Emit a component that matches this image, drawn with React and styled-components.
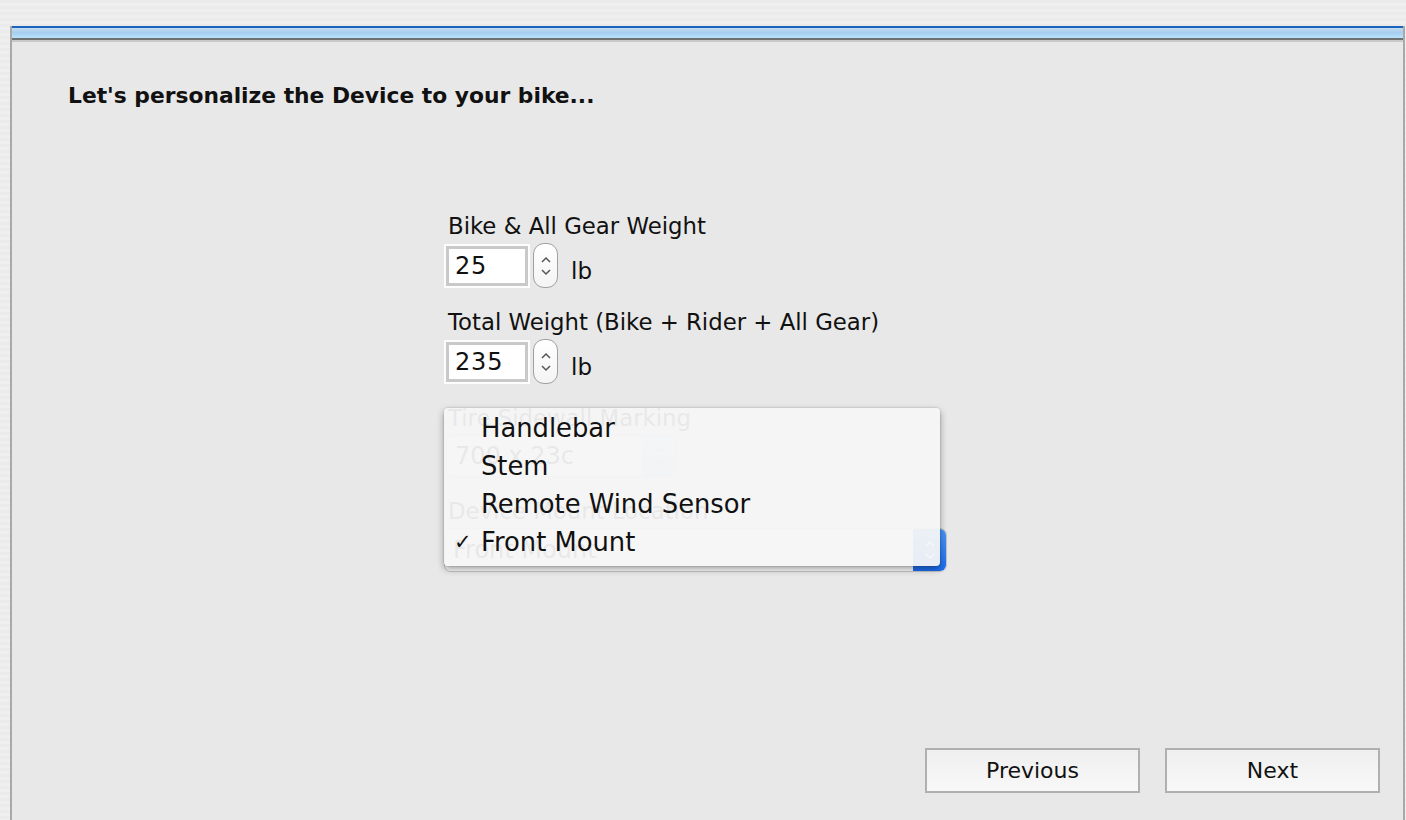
import React from 'react';
import styled, { createGlobalStyle } from 'styled-components';

const GlobalStyle = createGlobalStyle`
  html, body {
    margin: 0;
    padding: 0;
    height: 100%;
    overflow: hidden;
  }
  body {
    font-family: "DejaVu Sans", "Liberation Sans", sans-serif;
    color: #111;
    background: repeating-linear-gradient(
      to bottom,
      #ebebeb 0px,
      #ebebeb 3px,
      #efefef 3px,
      #efefef 6px
    );
  }
`;

const menuItems = [
  { name: 'Handlebar' },
  { name: 'Stem' },
  { name: 'Remote Wind Sensor' },
  { name: 'Front Mount', checked: true },
];

const Chevrons = ({ color = '#555' }) => (
  <svg width="12" height="26" viewBox="0 0 12 26">
    <path d="M2 9 L6 5 L10 9" fill="none" stroke={color} strokeWidth="1.5" />
    <path d="M2 17 L6 21 L10 17" fill="none" stroke={color} strokeWidth="1.5" />
  </svg>
);

const NumberField = ({ value, unit }) => (
  <ControlRow>
    <TextBox>{value}</TextBox>
    <Stepper>
      <Chevrons />
    </Stepper>
    <Unit>{unit}</Unit>
  </ControlRow>
);

const App = () => {
  return (
    <>
      <GlobalStyle />
      <Window>
        <TitleStrip />
        <Content>
          <Heading>Let's personalize the Device to your bike...</Heading>
          <Form>
            <Field>
              <Label>Bike &amp; All Gear Weight</Label>
              <NumberField value="25" unit="lb" />
            </Field>
            <Field>
              <Label>Total Weight (Bike + Rider + All Gear)</Label>
              <NumberField value="235" unit="lb" />
            </Field>
            <Field>
              <Label>Tire Sidewall Marking</Label>
              <PopUp width={230}>
                <PopUpValue>700 x 23c</PopUpValue>
                <PopUpArrows>
                  <Chevrons color="#8aa6d6" />
                </PopUpArrows>
              </PopUp>
            </Field>
            <Field>
              <Label>Device Mount Location</Label>
              <MenuAnchor>
                <PopUp width={503} active>
                  <PopUpValue>Front Mount</PopUpValue>
                  <PopUpArrows active>
                    <Chevrons color="#fff" />
                  </PopUpArrows>
                </PopUp>
                <Menu>
                  {menuItems.map(item => (
                    <MenuItem key={item.name}>
                      <Check>{item.checked ? '✓' : ''}</Check>
                      <span>{item.name}</span>
                    </MenuItem>
                  ))}
                </Menu>
              </MenuAnchor>
            </Field>
          </Form>
          <ButtonBar>
            <PushButton>Previous</PushButton>
            <PushButton>Next</PushButton>
          </ButtonBar>
        </Content>
      </Window>
    </>
  );
};
export default App;

const Window = styled.div`
  margin: 26px 1px 0 10px;
  height: calc(100vh - 26px);
  display: flex;
  flex-direction: column;
  border-left: 2px solid #a9a9a9;
  border-right: 2px solid #a9a9a9;
  background: #e8e8e8;
  box-sizing: border-box;
`;

const TitleStrip = styled.div`
  height: 10px;
  border-top: 2px solid #1b64bb;
  border-bottom: 2px solid #707070;
  box-shadow: 0 2px 0 #c9c9c9;
  background: linear-gradient(to bottom, #c4dbf1 0%, #a8ceef 45%, #b7e3fc 100%);
`;

const Content = styled.div`
  flex: 1;
  display: flex;
  flex-direction: column;
  padding: 43px 0 0 56px;
`;

const Heading = styled.h1`
  margin: 0;
  font-size: 21.8px;
  line-height: 26px;
  font-weight: bold;
`;

const Form = styled.div`
  margin: 104px 0 0 376px;
  display: flex;
  flex-direction: column;
  gap: 21px;
`;

const Field = styled.div`
  display: flex;
  flex-direction: column;
  gap: 3px;
`;

const Label = styled.div`
  padding-left: 4px;
  font-size: 22.8px;
  line-height: 27px;
`;

const ControlRow = styled.div`
  display: flex;
  align-items: flex-end;
`;

const TextBox = styled.div`
  width: 86px;
  height: 44px;
  box-sizing: border-box;
  padding-left: 9px;
  border: 2px solid #fdfdfd;
  box-shadow: inset 0 0 0 3px #c9c9c9;
  background: #fff;
  font-size: 24px;
  line-height: 40px;
  letter-spacing: 0.8px;
`;

const Stepper = styled.div`
  width: 25px;
  height: 45px;
  margin-left: 3px;
  box-sizing: border-box;
  border: 1.5px solid #a0a0a0;
  border-radius: 11px;
  background: linear-gradient(to bottom, #ffffff, #f4f4f4);
  display: flex;
  align-items: center;
  justify-content: center;
`;

const Unit = styled.span`
  margin: 0 0 3px 13px;
  font-size: 23px;
  line-height: 27px;
`;

const PopUp = styled.div`
  width: ${({ width }) => width}px;
  height: ${({ active }) => (active ? 44 : 42)}px;
  margin-left: ${({ active }) => (active ? 0 : 2)}px;
  box-sizing: border-box;
  display: flex;
  align-items: center;
  border: 1px solid #c4c4c4;
  border-radius: 7px;
  background: #fdfdfd;
  overflow: hidden;
`;

const PopUpValue = styled.span`
  flex: 1;
  padding-left: 8px;
  font-size: 24px;
`;

const PopUpArrows = styled.div`
  width: 33px;
  align-self: stretch;
  display: flex;
  align-items: center;
  justify-content: center;
  background: ${({ active }) =>
    active
      ? 'linear-gradient(to bottom, #4a97f7, #1b6cf0)'
      : 'linear-gradient(to bottom, #d9e6fa, #c6d8f5)'};
`;

const MenuAnchor = styled.div`
  position: relative;
`;

const Menu = styled.div`
  position: absolute;
  left: 0;
  top: -120px;
  width: 496px;
  height: 158px;
  box-sizing: border-box;
  padding-top: 1px;
  background: rgba(245, 245, 245, 0.94);
  border-radius: 4px;
  box-shadow: 0 3px 7px rgba(0, 0, 0, 0.38), 0 0 0 1px rgba(0, 0, 0, 0.06);
`;

const MenuItem = styled.div`
  display: flex;
  align-items: center;
  height: 38px;
  font-size: 25.8px;
  color: #111;
`;

const Check = styled.span`
  width: 37px;
  box-sizing: border-box;
  padding-left: 10px;
  font-size: 21px;
`;

const ButtonBar = styled.div`
  margin-top: auto;
  display: flex;
  justify-content: flex-end;
  gap: 25px;
  padding: 0 23px 27px 0;
`;

const PushButton = styled.button`
  width: 215px;
  height: 45px;
  border: 2px solid #b0b0b0;
  border-radius: 0;
  background: linear-gradient(to bottom, #efefef, #f8f8f8);
  font-family: "DejaVu Sans", "Liberation Sans", sans-serif;
  font-size: 22px;
  color: #111;
  padding: 0;
`;
